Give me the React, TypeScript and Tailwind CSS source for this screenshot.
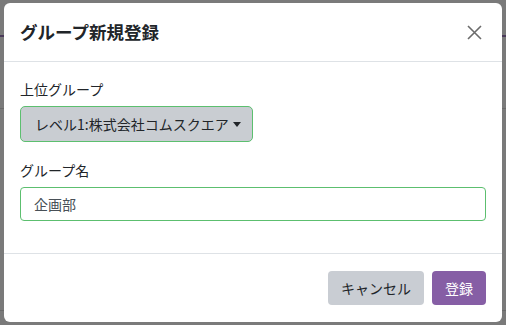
import React from 'react';

const font = { fontFamily: '"Noto Sans CJK JP", "Noto Sans", sans-serif' };

export default function App() {
  return (
    <div className="relative h-[325px] w-[506px] overflow-hidden bg-[#7a7a7a] px-[4px] pt-[3px]" style={font}>
      {/* dimmed page behind */}
      <div className="absolute left-0 top-[35px] h-[2px] w-full bg-[#4b3a5a]" />
      <div className="absolute left-0 top-[108px] h-px w-full bg-[#6a6a6a]" />
      <div className="absolute left-0 top-[310px] h-px w-full bg-[#6a6a6a]" />

      <div className="relative flex h-[319px] flex-col rounded-[6px] bg-white text-[#212529]">
        {/* Header */}
        <div className="flex h-[59px] items-center justify-between border-b border-[#dee2e6] pl-4 pr-[18px]">
          <h5 className="text-[17.5px] font-bold leading-none">グループ新規登録</h5>
          <button type="button" className="flex h-5 w-5 items-center justify-center text-[#6b6b6b]">
            <svg width="15" height="15" viewBox="0 0 15 15" fill="none" stroke="currentColor" strokeWidth="1.6">
              <path d="M1 1L14 14M14 1L1 14" />
            </svg>
          </button>
        </div>

        {/* Body */}
        <div className="flex flex-1 flex-col border-b border-[#dee2e6] px-4 pt-[17px]">
          <label className="text-[14px] leading-[21px]">上位グループ</label>
          <div className="mt-[6px]">
            <button
              type="button"
              className="flex h-[36px] items-center gap-[4px] rounded-[5px] border border-[#5cbf6f] bg-[#c9cdd2] pl-[14px] pr-[11px] text-[14px] text-[#212529]"
            >
              <span>レベル1:株式会社コムスクエア</span>
              <span className="h-0 w-0 border-x-[4.5px] border-t-[5px] border-x-transparent border-t-[#212529]" />
            </button>
          </div>

          <label className="mt-[18px] text-[14px] leading-[21px]">グループ名</label>
          <input
            readOnly
            value="企画部"
            className="mt-[6px] h-[34px] w-full rounded-[4px] border border-[#5cbf6f] px-[13px] text-[14px] text-[#495057] outline-none"
            style={font}
          />
        </div>

        {/* Footer */}
        <div className="flex h-[68px] items-center justify-end gap-[8px] px-4">
          <button type="button" className="h-[34px] w-[96px] rounded-[4px] bg-[#c9cdd3] text-[14px] text-[#212529]">
            キャンセル
          </button>
          <button type="button" className="h-[34px] w-[54px] rounded-[4px] bg-[#865ea5] text-[14px] text-white">
            登録
          </button>
        </div>
      </div>
    </div>
  );
}
